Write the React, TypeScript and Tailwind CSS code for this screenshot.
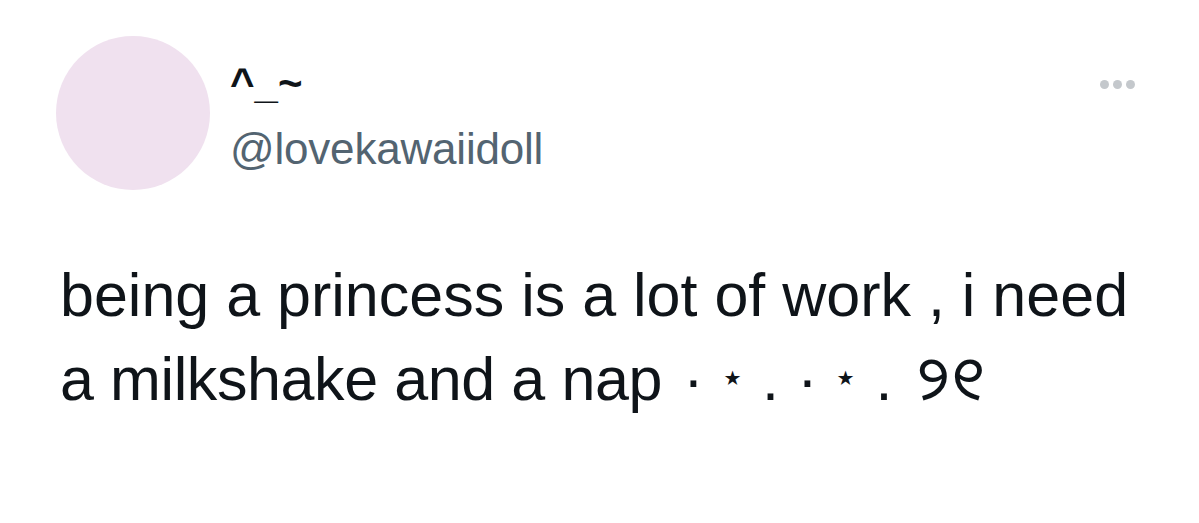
export default function App() {
  return (
    <div className="w-[1199px] h-[523px] bg-white overflow-hidden" style={{ fontFamily: '"Liberation Sans", Arial, sans-serif' }}>
      <div className="flex items-start pl-[56px] pr-[64px] pt-[36px]">
        <div className="w-[154px] h-[154px] rounded-full bg-[#f0e1ef] shrink-0" />
        <div className="ml-[20px] flex flex-col grow">
          <div className="mt-[24px] text-[42px] leading-[48px] font-bold text-[#0f1419]">^_~</div>
          <div className="mt-[16px] text-[44px] leading-[50px] text-[#536471] tracking-[-0.2px]">@lovekawaiidoll</div>
        </div>
        <div className="mt-[44px] flex gap-[4px]">
          <span className="w-[9px] h-[9px] rounded-full bg-[#c4c8cc]" />
          <span className="w-[9px] h-[9px] rounded-full bg-[#c4c8cc]" />
          <span className="w-[9px] h-[9px] rounded-full bg-[#c4c8cc]" />
        </div>
      </div>
      <div className="pl-[60px] mt-[64px] text-[61px] leading-[82px] text-[#0f1419]">
        <div className="whitespace-nowrap">being a princess is a lot of work , i need</div>
        <div className="whitespace-nowrap flex items-baseline">
          <span className="tracking-[-0.4px]">a milkshake and a nap</span>
          <span className="ml-[12px] inline-block w-[39px] text-center">·</span>
          <span className="inline-block w-[39px] text-center text-[40px]" style={{ fontFamily: '"DejaVu Sans", sans-serif' }}>
            <span className="relative -top-[9px]">⋆</span>
          </span>
          <span className="inline-block w-[37px] text-center">.</span>
          <span className="inline-block w-[37px] text-center">·</span>
          <span className="inline-block w-[39px] text-center text-[40px]" style={{ fontFamily: '"DejaVu Sans", sans-serif' }}>
            <span className="relative -top-[9px]">⋆</span>
          </span>
          <span className="inline-block w-[38px] text-center">.</span>
          <span className="ml-[13px]" style={{ fontFamily: '"Noto Sans Oriya", "Noto Sans", "DejaVu Sans", sans-serif' }}>୨୧</span>
        </div>
      </div>
    </div>
  );
}
